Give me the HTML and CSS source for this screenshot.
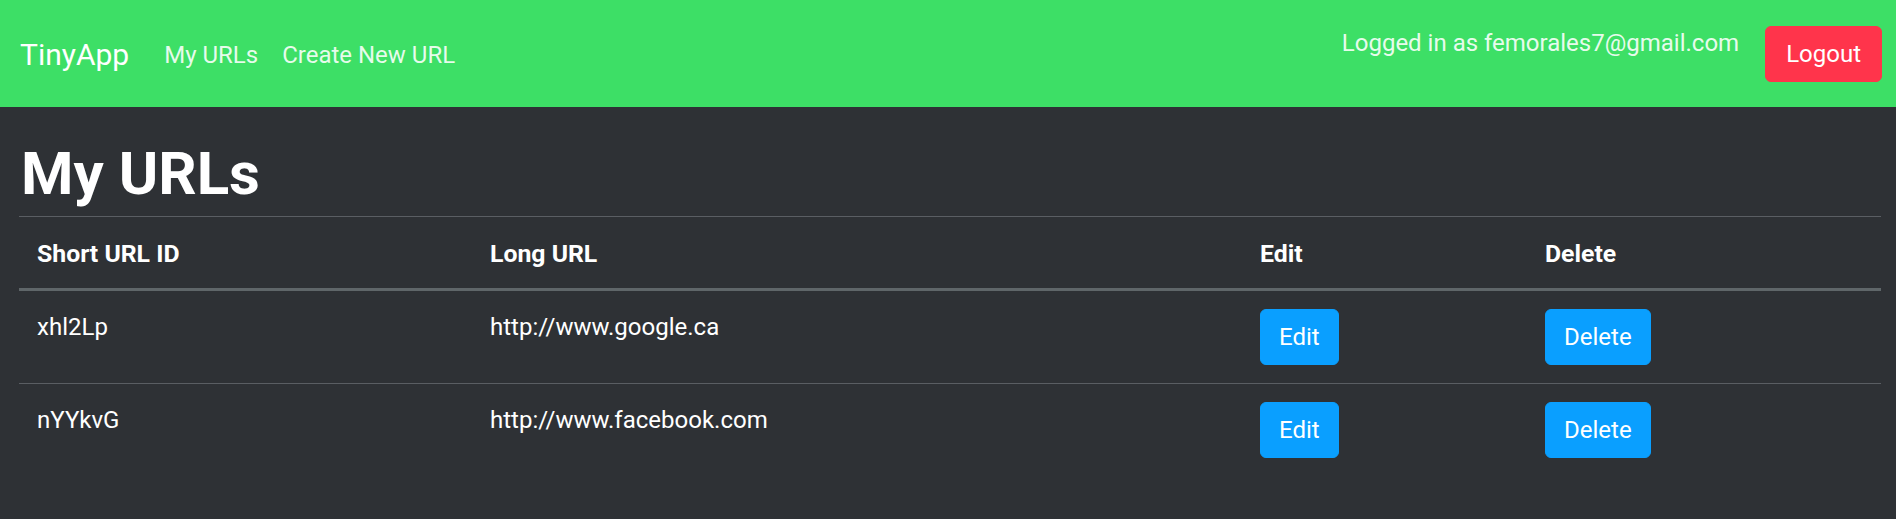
FILE: index.html
```html
<!DOCTYPE html>
<html lang="en">
<head>
<meta charset="utf-8">
<title>TinyApp</title>
<link rel="stylesheet" href="styles.css">
</head>
<body>
<nav class="navbar">
  <a class="brand" href="#">TinyApp</a>
  <div class="nav-links">
    <a class="nav-link" href="#">My URLs</a>
    <a class="nav-link" href="#">Create New URL</a>
  </div>
  <div class="nav-right">
    <span class="nav-text">Logged in as femorales7@gmail.com</span>
    <button class="btn btn-danger" type="button">Logout</button>
  </div>
</nav>
<main class="content">
  <h1 class="title">My URLs</h1>
  <table class="url-table">
    <thead>
      <tr>
        <th class="col-id">Short URL ID</th>
        <th class="col-long">Long URL</th>
        <th class="col-edit">Edit</th>
        <th class="col-delete">Delete</th>
      </tr>
    </thead>
    <tbody>
      <tr>
        <td>xhl2Lp</td>
        <td>http://www.google.ca</td>
        <td><button class="btn btn-primary" type="button">Edit</button></td>
        <td><button class="btn btn-primary" type="button">Delete</button></td>
      </tr>
      <tr>
        <td>nYYkvG</td>
        <td>http://www.facebook.com</td>
        <td><button class="btn btn-primary" type="button">Edit</button></td>
        <td><button class="btn btn-primary" type="button">Delete</button></td>
      </tr>
    </tbody>
  </table>
</main>
</body>
</html>
```
FILE: styles.css
```css
* { box-sizing: border-box; }

html, body {
  margin: 0;
  padding: 0;
  height: 100%;
}

body {
  background: #2e3135;
  color: #ffffff;
  font-family: "Segoe UI", Roboto, "Noto Sans", "Liberation Sans", sans-serif;
  font-size: 24px;
  line-height: 1.5;
}

a { text-decoration: none; }

.navbar {
  display: flex;
  align-items: flex-start;
  height: 107px;
  padding: 0 14px 0 20px;
  background: #3ddf66;
}

.brand {
  color: #ffffff;
  font-size: 30px;
  line-height: 36px;
  margin-top: 37px;
  margin-right: 23px;
}

.nav-links {
  display: flex;
  margin-top: 37px;
}

.nav-link {
  color: rgba(255, 255, 255, 0.88);
  font-size: 24px;
  line-height: 36px;
  padding: 0 12px;
}

.nav-right {
  margin-left: auto;
  display: flex;
  align-items: flex-start;
  gap: 26px;
}

.nav-text {
  color: rgba(255, 255, 255, 0.9);
  font-size: 24px;
  line-height: 36px;
  margin-top: 25px;
}

.btn {
  font-family: inherit;
  font-size: 24px;
  line-height: 36px;
  height: 56px;
  padding: 9px 19px;
  border: 1px solid transparent;
  border-radius: 6px;
  color: #ffffff;
  cursor: pointer;
}

.btn-danger {
  background: #ff344b;
  border-color: #ff344b;
  margin-top: 26px;
  padding: 9px 20px;
}

.btn-primary {
  background: #0a9fff;
  border-color: #0a9fff;
  display: block;
  padding: 9px 18px;
}

.content {
  padding: 0 15px 0 19px;
}

.title {
  margin: 30px 0 6px 2px;
  font-size: 60px;
  font-weight: 700;
  line-height: 73px;
}

.url-table {
  width: 100%;
  border-collapse: collapse;
  color: #ffffff;
}

.url-table th,
.url-table td {
  text-align: left;
  vertical-align: top;
  border-top: 1px solid #5a5e63;
}

.url-table th {
  font-weight: 700;
  font-size: 24.8px;
  line-height: 36px;
  padding: 19px 18px 16px 18px;
  border-bottom: 3px solid #5f6669;
}

.url-table td {
  font-size: 24px;
  line-height: 36px;
  padding: 18px 18px 18px 18px;
}

.url-table tbody tr:first-child td { border-top: none; }

.col-id { width: 453px; }
.col-long { width: 770px; }
.col-edit { width: 285px; }
.col-delete { width: 354px; }
```
